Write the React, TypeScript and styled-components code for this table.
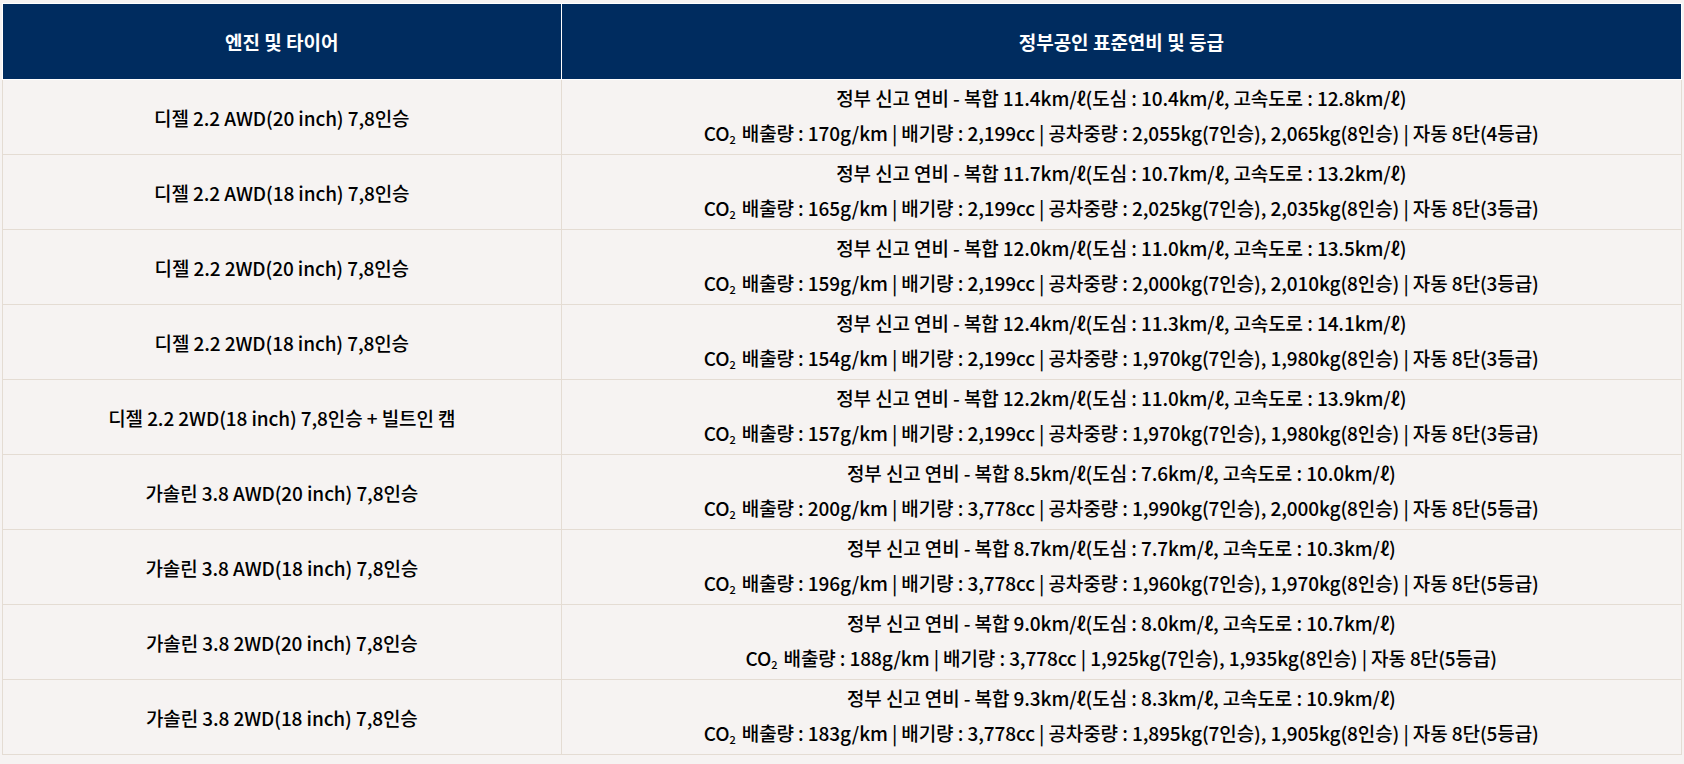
import React from "react";
import styled, { createGlobalStyle } from "styled-components";

const GlobalStyle = createGlobalStyle`
  html, body {
    margin: 0;
    padding: 0;
    background: #f6f3f2;
  }
  body {
    font-family: "Noto Sans CJK KR", "Noto Sans", sans-serif;
    color: #000;
  }
`;

const Wrapper = styled.div`
  padding: 3px 2px 0 2px;
`;

const Table = styled.table`
  width: 100%;
  border-collapse: collapse;
  table-layout: fixed;
  font-size: 19px;
`;

const HeadCell = styled.th`
  height: 75px;
  padding: 0;
  background: #002c5f;
  color: #fff;
  font-weight: 700;
  font-size: 19px;
  text-align: center;
  vertical-align: middle;
  border: 1px solid #fff;
`;

const Cell = styled.td`
  height: 74px;
  padding: 0;
  text-align: center;
  vertical-align: middle;
  border: 1px solid #e4dcd3;
  font-weight: 500;
  letter-spacing: -0.1px;
  line-height: 35px;
  white-space: nowrap;
`;

const Line = styled.div`
  line-height: 35px;
`;

const Sub = styled.sub`
  font-size: 11px;
  vertical-align: baseline;
  position: relative;
  top: 3px;
  margin-right: 6px;
`;

type Spec = {
  engine: string;
  combined: string;
  city: string;
  highway: string;
  co2: string;
  cc: string;
  weight7: string;
  weight8: string;
  grade: string;
  weightLabel?: boolean;
};

const rows: Spec[] = [
  { engine: "디젤 2.2 AWD(20 inch) 7,8인승", combined: "11.4", city: "10.4", highway: "12.8", co2: "170", cc: "2,199", weight7: "2,055", weight8: "2,065", grade: "4" },
  { engine: "디젤 2.2 AWD(18 inch) 7,8인승", combined: "11.7", city: "10.7", highway: "13.2", co2: "165", cc: "2,199", weight7: "2,025", weight8: "2,035", grade: "3" },
  { engine: "디젤 2.2 2WD(20 inch) 7,8인승", combined: "12.0", city: "11.0", highway: "13.5", co2: "159", cc: "2,199", weight7: "2,000", weight8: "2,010", grade: "3" },
  { engine: "디젤 2.2 2WD(18 inch) 7,8인승", combined: "12.4", city: "11.3", highway: "14.1", co2: "154", cc: "2,199", weight7: "1,970", weight8: "1,980", grade: "3" },
  { engine: "디젤 2.2 2WD(18 inch) 7,8인승 + 빌트인 캠", combined: "12.2", city: "11.0", highway: "13.9", co2: "157", cc: "2,199", weight7: "1,970", weight8: "1,980", grade: "3" },
  { engine: "가솔린 3.8 AWD(20 inch) 7,8인승", combined: "8.5", city: "7.6", highway: "10.0", co2: "200", cc: "3,778", weight7: "1,990", weight8: "2,000", grade: "5" },
  { engine: "가솔린 3.8 AWD(18 inch) 7,8인승", combined: "8.7", city: "7.7", highway: "10.3", co2: "196", cc: "3,778", weight7: "1,960", weight8: "1,970", grade: "5" },
  { engine: "가솔린 3.8 2WD(20 inch) 7,8인승", combined: "9.0", city: "8.0", highway: "10.7", co2: "188", cc: "3,778", weight7: "1,925", weight8: "1,935", grade: "5", weightLabel: false },
  { engine: "가솔린 3.8 2WD(18 inch) 7,8인승", combined: "9.3", city: "8.3", highway: "10.9", co2: "183", cc: "3,778", weight7: "1,895", weight8: "1,905", grade: "5" },
];

const App = (): JSX.Element => (
  <Wrapper>
    <GlobalStyle />
    <Table>
      <colgroup>
        <col style={{ width: "33.27%" }} />
        <col />
      </colgroup>
      <thead>
        <tr>
          <HeadCell>엔진 및 타이어</HeadCell>
          <HeadCell>정부공인 표준연비 및 등급</HeadCell>
        </tr>
      </thead>
      <tbody>
        {rows.map((r) => (
          <tr key={r.engine}>
            <Cell>{r.engine}</Cell>
            <Cell>
              <Line>
                정부 신고 연비 - 복합 {r.combined}km/ℓ(도심 : {r.city}km/ℓ, 고속도로 : {r.highway}km/ℓ)
              </Line>
              <Line>
                CO<Sub>2</Sub>배출량 : {r.co2}g/km | 배기량 : {r.cc}cc |{" "}
                {r.weightLabel === false ? "" : "공차중량 : "}
                {r.weight7}kg(7인승), {r.weight8}kg(8인승) | 자동 8단({r.grade}등급)
              </Line>
            </Cell>
          </tr>
        ))}
      </tbody>
    </Table>
  </Wrapper>
);

export default App;
